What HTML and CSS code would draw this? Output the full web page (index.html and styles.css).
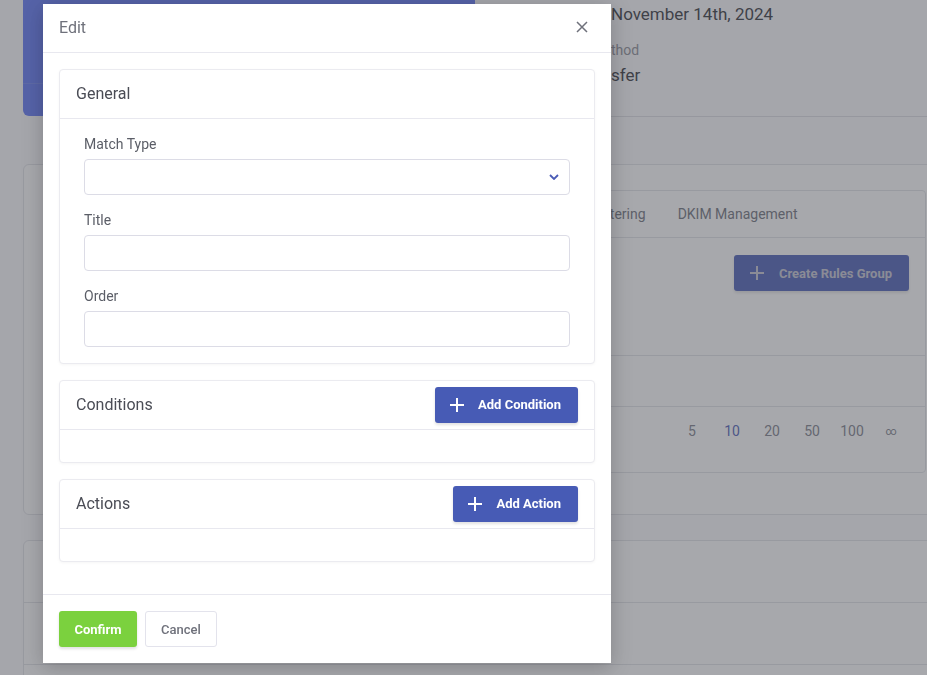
FILE: index.html
```html
<!DOCTYPE html>
<html lang="en">
<head>
<meta charset="utf-8">
<title>Edit</title>
<link rel="stylesheet" href="styles.css">
</head>
<body>
<div class="page">
  <div class="top-row">
    <div class="hero">
      <div class="hero-top"></div>
      <div class="hero-bottom"></div>
    </div>
    <div class="details">
      <div class="detail-value"><span class="pre">Due:</span>November 14th, 2024</div>
      <div class="detail-label"><span class="pre">Payment Me</span>thod</div>
      <div class="detail-value"><span class="pre">Bank Tran</span>sfer</div>
    </div>
  </div>

  <div class="main-card">
    <div class="inner-card">
      <div class="tabs">
        <span class="tab">General Settings</span>
        <span class="tab">Mail Filtering</span>
        <span class="tab">DKIM Management</span>
      </div>
      <div class="toolbar">
        <button class="btn btn-primary btn-dim">
          <svg class="plus" viewBox="0 0 16 16" width="16" height="16"><path d="M8 1v14M1 8h14" stroke="currentColor" stroke-width="2" fill="none"/></svg>
          Create Rules Group
        </button>
      </div>
      <div class="table-head"></div>
      <div class="pager">
        <span>5</span><span class="active">10</span><span>20</span><span>50</span><span>100</span><span class="inf">∞</span>
      </div>
    </div>
  </div>

  <div class="second-card">
    <div class="row"></div>
    <div class="row"></div>
  </div>
</div>

<div class="overlay"></div>

<div class="modal">
  <div class="modal-header">
    <span class="modal-title">Edit</span>
    <svg class="close" viewBox="0 0 12 12" width="12" height="12"><path d="M1 1l10 10M11 1L1 11" stroke="#6f717b" stroke-width="1.5" fill="none"/></svg>
  </div>
  <div class="modal-body">
    <section class="card">
      <div class="card-header"><h3>General</h3></div>
      <div class="card-body form">
        <label class="field">
          <span class="label">Match Type</span>
          <span class="select">
            <svg class="chev" viewBox="0 0 10 6" width="10" height="6"><path d="M1 1l4 4 4-4" stroke="#4a5bb6" stroke-width="1.8" fill="none"/></svg>
          </span>
        </label>
        <label class="field">
          <span class="label">Title</span>
          <span class="input"></span>
        </label>
        <label class="field">
          <span class="label">Order</span>
          <span class="input"></span>
        </label>
      </div>
    </section>

    <section class="card">
      <div class="card-header">
        <h3>Conditions</h3>
        <button class="btn btn-primary">
          <svg class="plus" viewBox="0 0 16 16" width="16" height="16"><path d="M8 1v14M1 8h14" stroke="currentColor" stroke-width="2" fill="none"/></svg>
          Add Condition
        </button>
      </div>
      <div class="card-empty"></div>
    </section>

    <section class="card">
      <div class="card-header">
        <h3>Actions</h3>
        <button class="btn btn-primary">
          <svg class="plus" viewBox="0 0 16 16" width="16" height="16"><path d="M8 1v14M1 8h14" stroke="currentColor" stroke-width="2" fill="none"/></svg>
          Add Action
        </button>
      </div>
      <div class="card-empty"></div>
    </section>
  </div>
  <div class="modal-footer">
    <button class="btn btn-success">Confirm</button>
    <button class="btn btn-light">Cancel</button>
  </div>
</div>
</body>
</html>
```
FILE: styles.css
```css
* { box-sizing: border-box; }
html, body { margin: 0; padding: 0; }
body {
  font-family: Roboto, "Liberation Sans", sans-serif;
  background: #fbfbfd;
  width: 927px;
  height: 675px;
  overflow: hidden;
  color: #2a2c33;
}

/* ---------- background page ---------- */
.page { padding-left: 23px; }
.top-row { display: flex; height: 117px; }
.hero {
  width: 452px;
  height: 116px;
  background: #5c74f6;
  border-radius: 0 0 6px 6px;
  display: flex;
  flex-direction: column;
}
.hero-top { height: 84px; border-bottom: 1px solid #6d83f3; }
.details {
  flex: 1;
  padding: 3px 0 0 60px;
  border-bottom: 1px solid #dcdde2;
  white-space: nowrap;
}
.pre {
  display: inline-block;
  width: 76px;
  overflow: hidden;
  text-align: right;
  vertical-align: top;
}
.detail-value { font-size: 17px; line-height: 22px; color: #2e3036; }
.detail-label { font-size: 14px; line-height: 20px; margin-top: 15px; color: #8a8c94; }
.detail-label + .detail-value { margin-top: 4px; }

.main-card {
  margin-top: 47px;
  height: 351px;
  width: 930px;
  border: 1px solid #e1e2e7;
  border-radius: 6px;
  background: #ffffff;
  padding: 25px 0 0 25px;
}
.inner-card {
  width: 877px;
  height: 283px;
  border: 1px solid #e1e2e7;
  border-radius: 4px;
  display: flex;
  flex-direction: column;
}
.tabs {
  height: 47px;
  border-bottom: 1px solid #e1e2e7;
  display: flex;
  align-items: center;
  gap: 32px;
  padding-left: 381px;
  font-size: 14px;
  color: #6b6e78;
  white-space: nowrap;
}
.toolbar { display: flex; justify-content: flex-end; padding: 17px 16px 0 0; height: 118px; border-bottom: 1px solid #e1e2e7; }
.table-head { height: 51px; border-bottom: 1px solid #e1e2e7; }
.pager {
  display: flex;
  justify-content: flex-end;
  padding: 16px 15px 0 0;
  font-size: 14px;
  color: #7a7d88;
}
.pager span { width: 40px; text-align: center; }
.pager .active { color: #4a5bb6; }
.pager .inf { font-size: 11px; width: 38px; line-height: 18px; }

.second-card {
  margin-top: 25px;
  height: 200px;
  width: 930px;
  border: 1px solid #e1e2e7;
  border-radius: 6px;
  background: #ffffff;
}
.second-card .row { height: 62px; border-bottom: 1px solid #e1e2e7; }

.overlay {
  position: fixed;
  inset: 0;
  background: rgba(79, 81, 89, 0.5);
}

/* ---------- modal ---------- */
.modal {
  position: fixed;
  left: 43px;
  top: 4px;
  width: 568px;
  height: 659px;
  background: #ffffff;
  box-shadow: 0 4px 20px rgba(0, 0, 0, 0.22);
  display: flex;
  flex-direction: column;
}
.modal-header {
  height: 49px;
  border-bottom: 1px solid #e8e8ef;
  display: flex;
  align-items: center;
  justify-content: space-between;
  padding: 0 23px 2px 16px;
}
.modal-title { font-size: 16px; color: #6f717b; }
.close { display: block; }

.modal-body {
  flex: 1;
  padding: 16px 16px 0;
  display: flex;
  flex-direction: column;
  gap: 16px;
  border-bottom: 1px solid #e8e8ef;
}
.card {
  border: 1px solid #ebebf0;
  border-radius: 4px;
  box-shadow: 0 1px 3px rgba(0, 0, 0, 0.04);
  background: #fff;
}
.card-header {
  height: 49px;
  border-bottom: 1px solid #e8e8ef;
  display: flex;
  align-items: center;
  justify-content: space-between;
  padding: 0 16px 1px;
}
.card-header h3 {
  margin: 0;
  font-size: 16px;
  font-weight: 400;
  color: #4a4c55;
}
.card-empty { height: 32px; }

.form { padding: 15px 24px 16px; display: flex; flex-direction: column; gap: 15px; }
.field { display: flex; flex-direction: column; gap: 5px; }
.label { font-size: 14px; line-height: 20px; color: #5b5e67; }
.input, .select {
  display: flex;
  align-items: center;
  justify-content: flex-end;
  height: 36px;
  border: 1px solid #dcdce6;
  border-radius: 4px;
  padding-right: 10px;
}
.chev { display: block; }

.btn {
  font-family: Roboto, "Liberation Sans", sans-serif;
  font-size: 13px;
  font-weight: 700;
  height: 36px;
  border-radius: 3px;
  border: 1px solid transparent;
  display: inline-flex;
  align-items: center;
  white-space: nowrap;
  cursor: pointer;
}
.btn-primary {
  background: #475bb5;
  color: #ffffff;
  padding: 0 16px 0 13px;
  gap: 13px;
  box-shadow: 0 2px 3px rgba(0, 0, 0, 0.12);
}
.btn-primary .plus { display: block; }
.btn-dim { color: #c4c5d2; padding-left: 14px; gap: 14px; }

.modal-footer {
  height: 68px;
  display: flex;
  align-items: flex-start;
  gap: 8px;
  padding: 16px 16px 0;
}
.btn-success {
  background: #7bd13e;
  color: #ffffff;
  width: 78px;
  justify-content: center;
  padding-bottom: 1px;
  box-shadow: 0 2px 3px rgba(0, 0, 0, 0.12);
}
.btn-light {
  background: #ffffff;
  color: #6f717b;
  border-color: #e3e3ec;
  width: 72px;
  justify-content: center;
  padding-bottom: 1px;
  font-weight: 500;
}
```
